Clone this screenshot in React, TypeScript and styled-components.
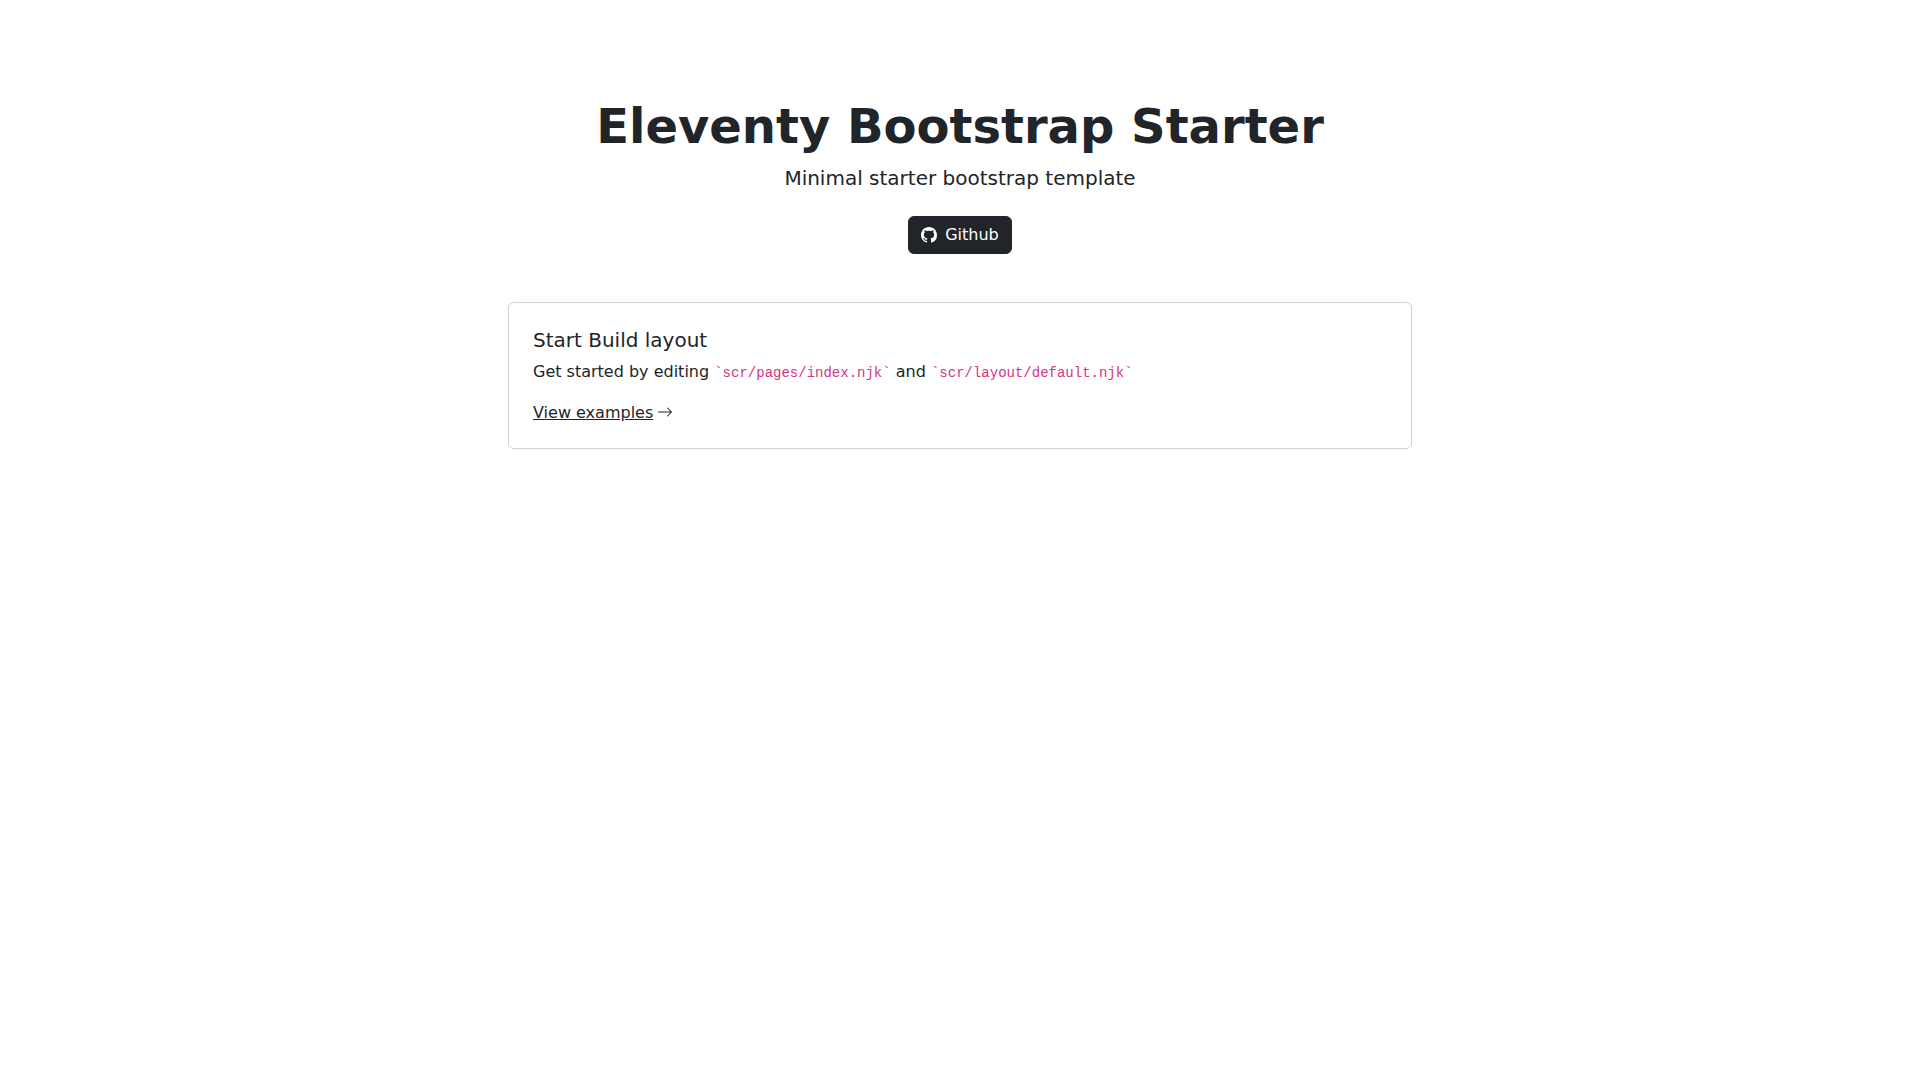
import styled, { createGlobalStyle } from "styled-components";
import { BsArrowRight, BsGithub } from "react-icons/bs";

const GlobalStyle = createGlobalStyle`
  *, *::before, *::after { box-sizing: border-box; }
  body {
    margin: 0;
    background: #fff;
    color: #212529;
    font-family: "DejaVu Sans", sans-serif;
    font-size: 16px;
    line-height: 24px;
  }
`;

const Container = styled.main`
  max-width: 928px;
  margin: 0 auto;
  padding: 96px 12px 48px;
`;

const Hero = styled.header`
  display: flex;
  flex-direction: column;
  align-items: center;
  margin-bottom: 48px;
  text-align: center;
`;

const Title = styled.h1`
  margin: 0 0 8px;
  font-size: 48px;
  font-weight: 700;
  line-height: 60px;
`;

const Lead = styled.p`
  margin: 0 0 24px;
  font-size: 20px;
  line-height: 28px;
`;

const ButtonLink = styled.a`
  display: inline-flex;
  align-items: center;
  gap: 8px;
  padding: 6px 12px;
  border: 1px solid #212529;
  border-radius: 6px;
  background: #212529;
  color: #fff;
  text-decoration: none;
`;

const Card = styled.section`
  padding: 25px 24px 23px;
  border: 1px solid #d0d0d0;
  border-radius: 6px;
`;

const CardTitle = styled.h2`
  margin: 0 0 8px;
  font-size: 20px;
  font-weight: 400;
  line-height: 24px;
`;

const CardText = styled.p`
  margin: 0 0 16px;
`;

const Code = styled.code`
  color: #d63384;
  font-family: "Liberation Mono", monospace;
  font-size: 14px;
`;

const TextLink = styled.a`
  color: #212529;
`;

const Arrow = styled(BsArrowRight)`
  margin-left: 4px;
  vertical-align: -2px;
`;

export default function App() {
  return (
    <>
      <GlobalStyle />
      <Container>
        <Hero>
          <Title>Eleventy Bootstrap Starter</Title>
          <Lead>Minimal starter bootstrap template</Lead>
          <ButtonLink href="#github">
            <BsGithub aria-hidden />
            Github
          </ButtonLink>
        </Hero>
        <Card>
          <CardTitle>Start Build layout</CardTitle>
          <CardText>
            Get started by editing <Code>`scr/pages/index.njk`</Code> and{" "}
            <Code>`scr/layout/default.njk`</Code>
          </CardText>
          <TextLink href="#examples">View examples</TextLink>
          <Arrow aria-hidden />
        </Card>
      </Container>
    </>
  );
}
